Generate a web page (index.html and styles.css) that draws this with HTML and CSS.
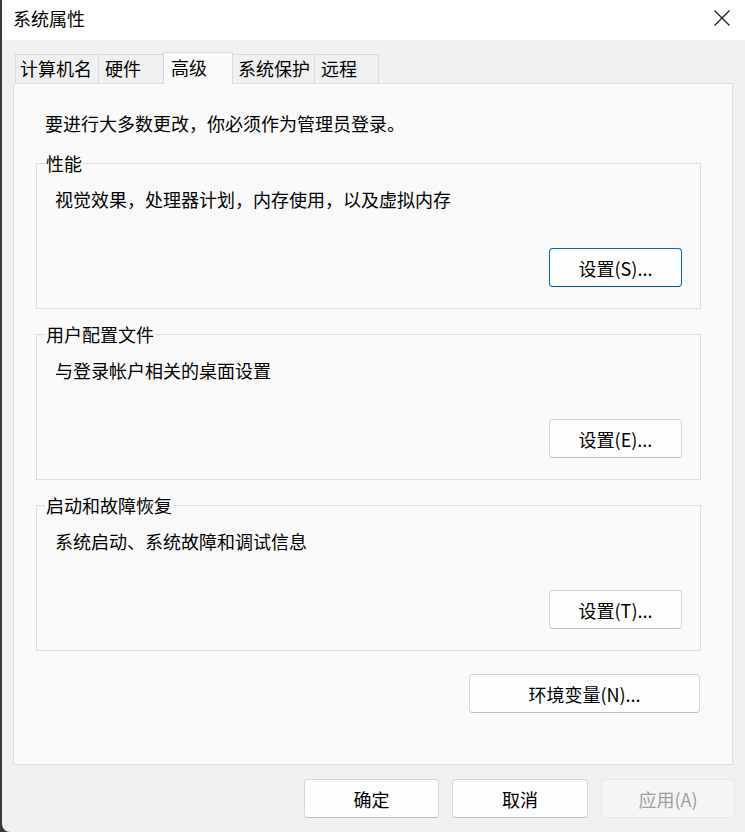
FILE: index.html
```html
<!DOCTYPE html>
<html lang="zh-CN">
<head>
<meta charset="utf-8">
<title>系统属性</title>
<link rel="stylesheet" href="styles.css">
</head>
<body>
<div class="window">
  <div class="titlebar">
    <span class="title">系统属性</span>
    <svg class="close" width="16" height="16" viewBox="0 0 16 16" aria-hidden="true">
      <path d="M0.5 0.5 L15.5 15.5 M15.5 0.5 L0.5 15.5" stroke="#1a1a1a" stroke-width="1.2" fill="none"/>
    </svg>
  </div>
  <div class="content">
    <div class="tabs">
      <div class="tab t1">计算机名</div>
      <div class="tab t2">硬件</div>
      <div class="tab t3 selected">高级</div>
      <div class="tab t4">系统保护</div>
      <div class="tab t5">远程</div>
    </div>
    <div class="panel">
      <p class="note">要进行大多数更改，你必须作为管理员登录。</p>
      <fieldset class="group">
        <legend>性能</legend>
        <p class="desc">视觉效果，处理器计划，内存使用，以及虚拟内存</p>
        <div class="row-right"><button class="btn focused">设置(S)...</button></div>
      </fieldset>
      <fieldset class="group">
        <legend>用户配置文件</legend>
        <p class="desc">与登录帐户相关的桌面设置</p>
        <div class="row-right"><button class="btn">设置(E)...</button></div>
      </fieldset>
      <fieldset class="group">
        <legend>启动和故障恢复</legend>
        <p class="desc">系统启动、系统故障和调试信息</p>
        <div class="row-right"><button class="btn">设置(T)...</button></div>
      </fieldset>
      <div class="row-right env-row"><button class="btn env">环境变量(N)...</button></div>
    </div>
    <div class="footer">
      <button class="btn foot ok">确定</button>
      <button class="btn foot cancel">取消</button>
      <button class="btn foot apply" disabled>应用(A)</button>
    </div>
  </div>
</div>
</body>
</html>
```
FILE: styles.css
```css
* { box-sizing: border-box; }
html, body {
  margin: 0;
  padding: 0;
}
body {
  width: 745px;
  height: 832px;
  background: #383838;
  overflow: hidden;
  font-family: "Noto Sans CJK SC", "Noto Sans", sans-serif;
  font-size: 18px;
  color: #000;
}
.window {
  margin-left: 2px;
  height: 832px;
  background: #f0f0f0;
  border-bottom-left-radius: 8px;
  overflow: hidden;
  display: flex;
  flex-direction: column;
}
.titlebar {
  height: 40px;
  flex: none;
  background: #ffffff;
  display: flex;
  align-items: center;
  justify-content: space-between;
  padding: 0 15px 5px 11px;
  line-height: 24px;
}
.close { display: block; }
.content {
  padding: 12px 12px 0 11px;
  display: flex;
  flex-direction: column;
}
.tabs {
  display: flex;
  align-items: flex-end;
  margin-left: 2px;
  height: 31px;
}
.tab {
  height: 29px;
  line-height: 27px;
  border: 1px solid #dadada;
  border-bottom: none;
  background: #f0f0f0;
  white-space: nowrap;
  margin-left: -1px;
}
.tab.t1 { width: 84px; padding-left: 4px; margin-left: 0; }
.tab.t2 { width: 66px; padding-left: 6px; }
.tab.t3 { width: 70px; padding-left: 7px; }
.tab.t4 { width: 83px; padding-left: 5px; }
.tab.t5 { width: 65px; padding-left: 6px; }
.tab.selected {
  height: 32px;
  line-height: 28px;
  margin-bottom: -1px;
  background: #f9f9f9;
  position: relative;
  z-index: 1;
}
.panel {
  background: #f9f9f9;
  border: 1px solid #dedede;
  padding: 27px 31px 51px 22px;
  display: flex;
  flex-direction: column;
}
.note {
  margin: 0 0 16px 9px;
  line-height: 24px;
}
.group {
  margin: 0 0 13px 0;
  min-width: 0;
  border: 1px solid #dcdcdc;
  padding: 12px 18px 21px 18px;
}
.group legend {
  padding: 0 1px;
  margin-left: -10px;
  line-height: 24px;
}
.desc {
  margin: 0 0 37px 0;
  line-height: 24px;
}
.row-right {
  display: flex;
  justify-content: flex-end;
}
.btn {
  font-family: "Noto Sans CJK SC", "Noto Sans", sans-serif;
  font-size: 18px;
  color: #000;
  height: 39px;
  width: 133px;
  padding: 0;
  line-height: 24px;
  background: #fdfdfd;
  border: 1px solid #d4d4d4;
  border-bottom-color: #bdbdbd;
  border-radius: 4px;
}
.btn.focused {
  border: 1px solid #0067c0;
  border-bottom-color: #0057a8;
}
.env-row {
  margin-top: 10px;
  margin-right: 1px;
}
.btn.env { width: 231px; }
.footer {
  display: flex;
  justify-content: flex-end;
  gap: 14px;
  padding-top: 14px;
  margin-right: -2px;
}
.btn.ok { width: 135px; }
.btn.cancel { width: 136px; margin-left: -1px; }
.btn.apply {
  width: 134px;
  background: #f5f5f5;
  border: 1px solid #e6e6e6;
  color: #9d9d9d;
  margin-left: -1px;
}
```
